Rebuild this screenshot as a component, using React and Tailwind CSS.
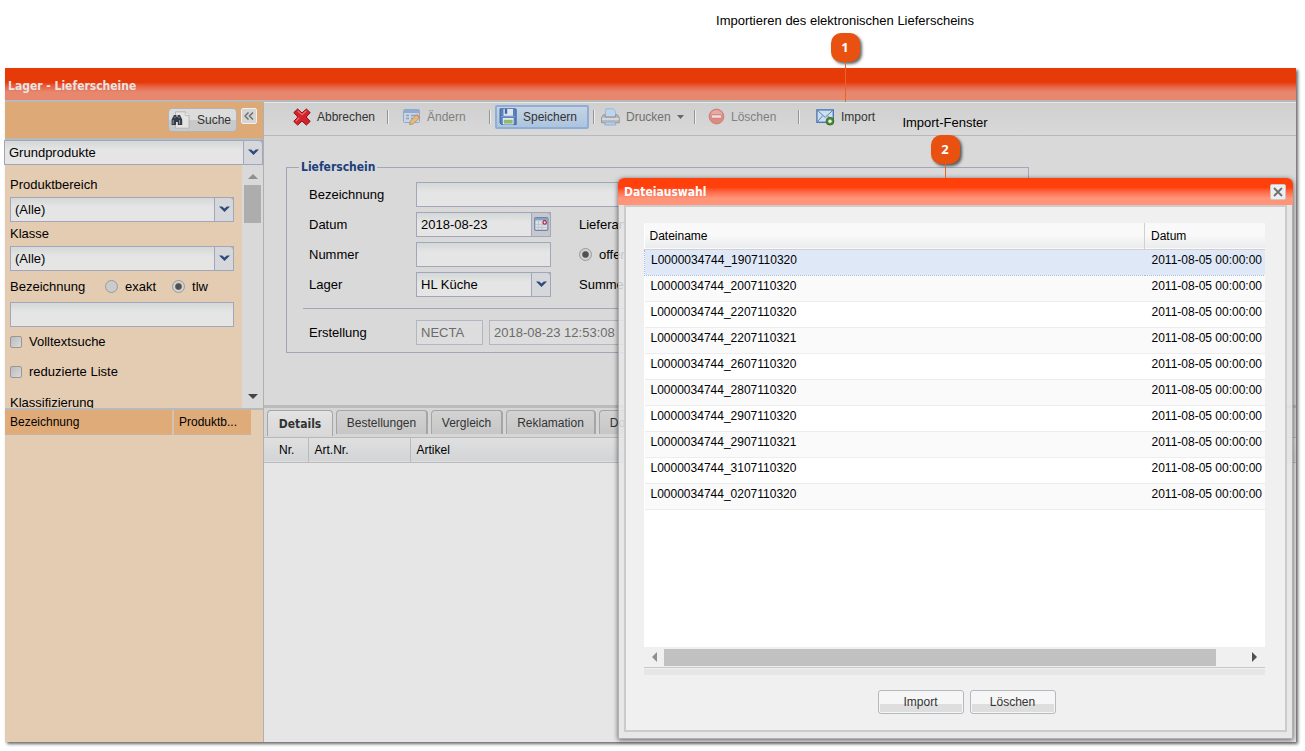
import { useState } from 'react';

const FILES = [
    'L0000034744_1907110320',
    'L0000034744_2007110320',
    'L0000034744_2207110320',
    'L0000034744_2207110321',
    'L0000034744_2607110320',
    'L0000034744_2807110320',
    'L0000034744_2907110320',
    'L0000034744_2907110321',
    'L0000034744_3107110320',
    'L0000034744_0207110320',
];

const TABS = [
    { name: 'Bestellungen', width: 'w-[92px]' },
    { name: 'Vergleich', width: 'w-[72px]' },
    { name: 'Reklamation', width: 'w-[90px]' },
    { name: 'Dokumente', width: 'w-[84px]' },
];

const fieldClass = 'h-[25px] border border-[#a1a6ba] bg-linear-to-b from-[#d4d8d7] to-[#e5e5e5] to-40% px-1 text-[13px] text-black rounded-none outline-none';

/* ---------- icons ---------- */

function CancelIcon() {
    return (
        <svg width="18" height="18" viewBox="0 0 18 18" className="shrink-0">
            <path d="M4.6 1 9 4.900l4.400-3.900 3.800 3.600L13.200 9l4 4.400-3.800 3.700L9 13.100l-4.400 4-3.800-3.700 4-4.400-4-4.400z" fill="#d3222b" stroke="#8f1118" strokeWidth="1" strokeLinejoin="round" />
            <path d="M4.6 2.800 9 6.700l4.400-3.900M2.800 13.200 6.200 9.600" fill="none" stroke="#ee6c6c" strokeWidth="1.300" />
        </svg>
    );
}

function EditIcon() {
    return (
        <svg width="18" height="18" viewBox="0 0 18 18" className="shrink-0">
            <rect x="0.5" y="1.5" width="16" height="13" rx="1" fill="#cbd5e2" stroke="#93a9c9" />
            <path d="M1 2h15v3H1z" fill="#8fabd4" />
            <path d="M3 7.5h3M8 7.5h5M3 10.5h3M8 10.5h3" stroke="#8da3c2" strokeWidth="1.4" />
            <path d="m6.600 16.600.8-3.600L14 6.400l3 2.800-6.600 6.600z" fill="#e2bd7c" stroke="#b89058" strokeWidth="0.9" />
            <path d="m13 7.400 3 2.800 1-1-3-2.800z" fill="#d98e80" />
        </svg>
    );
}

function SaveIcon() {
    return (
        <svg width="18" height="18" viewBox="0 0 18 18" className="shrink-0">
            <path d="M1 .8h15.500q.7 0 .7.7v15H2.500L1 15z" fill="#5a80bf" stroke="#3d629f" strokeWidth="0.9" />
            <path d="M4.500 1h9.500v6.800H4.500z" fill="#dfe5ed" />
            <path d="M5.800 1h2.400v4.800H5.800z" fill="#41659f" />
            <path d="M2 8.600h14.400" stroke="#7d9dd0" strokeWidth="1" />
            <path d="M3.800 10h10.800v6.500H3.800z" fill="#e3eae4" />
            <path d="M4.800 11.800h8.800v3.800H4.800z" fill="#8dba70" />
        </svg>
    );
}

function PrinterIcon() {
    return (
        <svg width="19" height="18" viewBox="0 0 19 18" className="shrink-0">
            <path d="M5 .8h7l2.600 2.400V9H4z" fill="#bfd5ee" stroke="#92afd0" strokeWidth="0.8" />
            <path d="M2.400 6.800h1.800V9h10.400V6.800h1.800l1.800 2.600v5.400H.6V9.400z" fill="#b9bbbe" stroke="#8f9195" strokeWidth="0.9" />
            <path d="M1 11h16.800" stroke="#dddfe1" strokeWidth="1.6" />
            <path d="M4.500 14h9.500l.8 3H3.700z" fill="#b4cde9" stroke="#8ba8c8" strokeWidth="0.8" />
        </svg>
    );
}

function DeleteIcon() {
    return (
        <svg width="17" height="17" viewBox="0 0 17 17" className="shrink-0">
            <circle cx="8.5" cy="8.5" r="7.4" fill="#db8b82" stroke="#cf8279" />
            <path d="M2.600 6.600a6.200 6.200 0 0 1 11.800 0q-6-1.400-11.800 0z" fill="#e5aaa3" />
            <rect x="3.6" y="7" width="9.8" height="3" rx="0.6" fill="#ece3e2" stroke="#cf776e" strokeWidth="0.5" />
        </svg>
    );
}

function MailIcon() {
    return (
        <svg width="19" height="18" viewBox="0 0 19 18" className="shrink-0">
            <rect x="0.9" y="1.9" width="16.4" height="12.4" fill="#cfdeef" stroke="#4f78b3" strokeWidth="1.4" />
            <path d="m1.400 2.400 7.700 7 7.700-7M1.400 13.800l5.200-6M16.800 13.800l-5.200-6" fill="none" stroke="#5b82ba" strokeWidth="1" />
            <circle cx="14" cy="13.2" r="3.9" fill="#4f8a35" stroke="#35671f" strokeWidth="0.8" />
            <circle cx="14" cy="13.2" r="1.7" fill="#e9f3e4" />
        </svg>
    );
}

function BinocularsIcon() {
    return (
        <svg width="20" height="18" viewBox="0 0 20 18" className="shrink-0">
            <path d="M4.500.8h9.800L18 4.500v12.700H4.500z" fill="#e4e4e2" stroke="#b3b3af" strokeWidth="0.9" />
            <path d="M14.300.8v3.700H18" fill="#f1f1ef" stroke="#b3b3af" strokeWidth="0.8" />
            <path d="M3 4h2.400v1.800h1.200V4H9l2.200 4.600V14H6.800v-3H5v3H.6V8.600z" fill="#353c46" />
            <path d="M2.200 9v4M8.600 9v4M3.900 5.600v1.600M8 5.600v1.600" stroke="#8b97a8" strokeWidth="1" />
        </svg>
    );
}

function CalendarIcon() {
    return (
        <svg width="15" height="15" viewBox="0 0 15 15">
            <rect x="0.7" y="0.7" width="13.2" height="12.6" rx="1" fill="#dcdfe4" stroke="#7086ab" strokeWidth="1.2" />
            <path d="M1 1h12.600v2.400H1z" fill="#8ba0c2" />
            <path d="M4.500 4v9M8 4v9M1.500 7.500H13M1.500 10.400H13" stroke="#bac1cc" strokeWidth="0.8" />
            <circle cx="10.7" cy="5.4" r="1.7" fill="#f3eaea" stroke="#a02a35" strokeWidth="1.2" />
        </svg>
    );
}

function Chevron() {
    return (
        <svg width="11" height="7" viewBox="0 0 11 7">
            <path d="M0 .5h3.200l2.300 2 2.300-2H11L5.500 6z" fill="#2d4a80" />
        </svg>
    );
}

function Triangle({ dir, color = '#505050' }) {
    const d = {
        up: 'M0 8 5 3l5 5z',
        down: 'M0 2h10L5 7z',
        left: 'M7 0v10L2 5z',
        right: 'M3 0v10l5-5z',
    }[dir];
    return (
        <svg width="10" height="10" viewBox="0 0 10 10">
            <path d={d} fill={color} />
        </svg>
    );
}

/* ---------- form parts ---------- */

function Combo({ id, value, label, className = '' }) {
    return (
        <div className={`relative ${className}`}>
            <select id={id} aria-label={label} defaultValue={value} className={`${fieldClass} w-full appearance-none pr-5`}>
                <option>{value}</option>
            </select>
            <span className="pointer-events-none absolute inset-y-0 right-0 flex w-5 items-center justify-center rounded-tr-sm border border-[#a1a6ba] bg-[#d6d7da]">
                <Chevron />
            </span>
        </div>
    );
}

function Radio({ name, label, checked }) {
    return (
        <label className="flex items-center gap-[7px]">
            <input
                type="radio"
                name={name}
                defaultChecked={checked}
                className="h-[13px] w-[13px] appearance-none rounded-full border border-[#9a9a9a] bg-[#cbcbcb] checked:bg-radial checked:from-[#505050] checked:from-35% checked:to-[#d2d2d2] checked:to-50%"
            />
            {label}
        </label>
    );
}

function Check({ label }) {
    return (
        <label className="flex h-[30px] items-center gap-[7px]">
            <input type="checkbox" className="h-3 w-3 appearance-none rounded-xs border border-[#979797] bg-linear-to-br from-[#bcbcbc] to-[#dadada]" />
            {label}
        </label>
    );
}

function Separator() {
    return <span className="h-[14px] w-0.5 border-r border-[#eeeeee] bg-[#959595]" />;
}

function ToolButton({ icon, children, className }) {
    return (
        <button type="button" className={`flex h-6 items-center gap-1.5 text-[12px] ${className}`}>
            {icon}
            {children}
        </button>
    );
}

function Toolbar() {
    return (
        <div className="flex h-[34px] items-center gap-1 border-b border-[#b9b9b9] bg-linear-to-b from-[#cfcfcf] to-[#d9d9d9] pb-1 pl-[29px] shadow-[inset_0_1px_0_#e6e6e6]">
            <ToolButton icon={<CancelIcon />} className="w-[90px] text-[#333]">Abbrechen</ToolButton>
            <Separator />
            <ToolButton icon={<EditIcon />} className="w-[92px] pl-2.5 text-[#808080]">Ändern</ToolButton>
            <Separator />
            <ToolButton icon={<SaveIcon />} className="w-[94px] rounded-xs border-2 border-[#8dafd6] bg-linear-to-b from-[#c6d4e4] to-[#adc4df] pl-0.5 text-[#333]">Speichern</ToolButton>
            <Separator />
            <ToolButton icon={<PrinterIcon />} className="w-[91px] pl-0.5 text-[#707070]">
                Drucken
                <svg width="7" height="4" viewBox="0 0 7 4">
                    <path d="M0 0h7L3.500 4z" fill="#666" />
                </svg>
            </ToolButton>
            <Separator />
            <ToolButton icon={<DeleteIcon />} className="w-[94px] pl-2 text-[#808080]">Löschen</ToolButton>
            <Separator />
            <ToolButton icon={<MailIcon />} className="pl-3 text-[#333]">Import</ToolButton>
        </div>
    );
}

function Sidebar() {
    return (
        <aside className="flex w-[259px] shrink-0 flex-col border-r border-[#b0b0b0] bg-[#e4ccb3] text-[13px]">
            <div className="flex h-[38px] items-start justify-end gap-1 border-b-2 border-[#b9b9b9] bg-[#dda977] pt-1.5 pr-1.5">
                <button type="button" className="flex h-6 w-[69px] items-center gap-1.5 rounded-sm border border-[#b3b3b3] bg-linear-to-b from-[#dcdcdc] from-50% to-[#c9c9c9] to-50% pl-0.5 text-[12px] text-[#333]">
                    <BinocularsIcon />
                    Suche
                </button>
                <button type="button" aria-label="Einklappen" className="flex h-4 w-4 items-center justify-center rounded-xs border border-[#efefef] bg-[#d5d5d5]">
                    <svg width="10" height="8" viewBox="0 0 10 8">
                        <path d="M4.500.5 1 4l3.500 3.500M9 .5 5.500 4 9 7.500" fill="none" stroke="#707070" strokeWidth="1.500" />
                    </svg>
                </button>
            </div>
            <Combo value="Grundprodukte" label="Produktart" className="-ml-px" />
            <div className="flex h-[245px] border-b-2 border-[#b9b9b9]">
                <div className="min-w-0 flex-1 overflow-hidden px-[5px] pt-2 pr-2">
                    <label htmlFor="bereich" className="block leading-6">Produktbereich</label>
                    <Combo id="bereich" value="(Alle)" />
                    <label htmlFor="klasse" className="block leading-6">Klasse</label>
                    <Combo id="klasse" value="(Alle)" />
                    <div className="flex h-[31px] items-center">
                        <label htmlFor="suchbegriff" className="w-[95px]">Bezeichnung</label>
                        <div className="flex gap-4">
                            <Radio name="suchart" label="exakt" />
                            <Radio name="suchart" label="tlw" checked />
                        </div>
                    </div>
                    <input id="suchbegriff" type="text" className={`${fieldClass} w-full`} />
                    <Check label="Volltextsuche" />
                    <Check label="reduzierte Liste" />
                    <span className="block leading-8">Klassifizierung</span>
                </div>
                <div className="flex w-[21px] flex-col items-center justify-between bg-[#d9d9d9] pt-1.5 pb-1.5">
                    <div className="flex flex-col items-center gap-1">
                        <Triangle dir="up" color="#8f8f8f" />
                        <div className="h-[38px] w-[17px] bg-[#adadad]" />
                    </div>
                    <Triangle dir="down" color="#444" />
                </div>
            </div>
            <table className="w-[246px] table-fixed text-left text-[12px]">
                <thead>
                    <tr className="h-6 border-b border-[#c5b49f] bg-[#dfab79]">
                        <th className="w-[168px] border-r-2 border-[#d2c3b3] pl-[5px] font-normal">Bezeichnung</th>
                        <th className="pl-[5px] font-normal">Produktb...</th>
                    </tr>
                </thead>
            </table>
        </aside>
    );
}

function DeliveryForm() {
    return (
        <div className="h-[272px] border-b-[3px] border-[#bbbbbb] pt-[21px] pl-[22px] text-[13px]">
            <fieldset className="w-[743px] border border-[#a2a6b8] px-4 pb-[7px]">
                <legend className="-ml-1 px-0.5 font-['DejaVu_Sans_Condensed','Noto_Sans'] text-[12px] leading-5 font-bold text-[#1c3f7c]">Lieferschein</legend>
                <div className="flex flex-col gap-[5px] pt-[5px] pl-1.5">
                    <div className="flex items-center">
                        <label htmlFor="bezeichnung" className="w-[107px]">Bezeichnung</label>
                        <input id="bezeichnung" type="text" className={`${fieldClass} flex-1`} />
                    </div>
                    <div className="flex items-center">
                        <label htmlFor="datum" className="w-[107px]">Datum</label>
                        <div className="relative w-[135px]">
                            <input id="datum" type="text" defaultValue="2018-08-23" className={`${fieldClass} w-full`} />
                            <button type="button" aria-label="Kalender" className="absolute inset-y-0 right-0 flex w-5 items-center justify-center rounded-tr-sm border border-[#a1a6ba] bg-[#c6c8cc]">
                                <CalendarIcon />
                            </button>
                        </div>
                        <span className="ml-7">Lieferant</span>
                    </div>
                    <div className="flex items-center">
                        <label htmlFor="nummer" className="w-[107px]">Nummer</label>
                        <input id="nummer" type="text" className={`${fieldClass} mr-7 w-[135px]`} />
                        <Radio name="status" label="offen" checked />
                    </div>
                    <div className="flex items-center">
                        <label htmlFor="lager" className="w-[107px]">Lager</label>
                        <Combo id="lager" value="HL Küche" className="mr-7 w-[135px]" />
                        <span>Summe</span>
                    </div>
                </div>
                <hr className="my-[11px] border-[#a2a6b8]" />
                <div className="flex items-center gap-1.5 pl-1.5">
                    <label htmlFor="ersteller" className="w-[101px]">Erstellung</label>
                    <input id="ersteller" type="text" disabled defaultValue="NECTA" className="h-[25px] w-[67px] border border-[#b3b6c2] bg-[#dddddd] px-1 text-[#6c6c6c]" />
                    <input type="text" aria-label="Erstellt am" disabled defaultValue="2018-08-23 12:53:08" className="h-[25px] w-40 border border-[#b3b6c2] bg-[#dddddd] px-1 text-[#6c6c6c]" />
                </div>
            </fieldset>
        </div>
    );
}

function Details() {
    return (
        <div className="flex flex-1 flex-col bg-[#e6e6e6] text-[12px]">
            <div role="tablist" className="flex h-[30px] items-start gap-[3px] overflow-hidden border-b border-[#b9b9b9] bg-[#d6d6d6] pt-0.5 pl-[3px]">
                <button type="button" role="tab" aria-selected="true" className="h-[26px] w-[66px] shrink-0 rounded-t-sm border border-b-0 border-[#a5a5a5] bg-linear-to-b from-[#e3e3e3] to-[#d8d8d8] font-['DejaVu_Sans_Condensed','Noto_Sans'] font-bold text-[#333]">
                    Details
                </button>
                {TABS.map((tab) => (
                    <button key={tab.name} type="button" role="tab" className={`h-6 shrink-0 rounded-t-sm border border-r-2 border-b-0 border-[#a5a5a5] bg-linear-to-b from-[#d3d3d3] to-[#c6c6c6] text-[#333] ${tab.width}`}>
                        {tab.name}
                    </button>
                ))}
            </div>
            <table className="w-full table-fixed text-left">
                <thead>
                    <tr className="h-6 border-b border-[#b9b9b9] bg-linear-to-b from-[#e0e0e0] to-[#d2d4d6]">
                        <th className="w-11 border-r border-[#b9b9b9] pl-[15px] font-normal">Nr.</th>
                        <th className="w-[102px] border-r border-[#b9b9b9] pl-1.5 font-normal">Art.Nr.</th>
                        <th className="pl-1.5 font-normal">Artikel</th>
                    </tr>
                </thead>
            </table>
        </div>
    );
}

function FileDialog() {
    const [selected, setSelected] = useState(0);
    const buttonClass = 'h-6 w-[86px] rounded-[3px] border border-[#b4b9be] bg-linear-to-b from-[#f6f6f6] from-60% to-[#dedede] to-60% text-[#333] shadow-[inset_0_0_0_1px_#f6f6f6]';

    return (
        <div role="dialog" aria-label="Dateiauswahl" className="absolute top-[110px] right-[3px] w-[675px] rounded-t-md border border-t-0 border-[#b0b0b0] bg-[#e6e6e6]/85 shadow-[0_1px_5px_rgba(0,0,0,0.6)]">
            <div className="-mx-px flex h-[27px] items-center justify-between rounded-t-md bg-linear-to-b from-[#ff400a] from-35% to-[#ff9478] to-75% pr-[7px] pl-1.5">
                <h2 className="font-['DejaVu_Sans_Condensed','Noto_Sans'] text-[12px] font-bold text-white">Dateiauswahl</h2>
                <button type="button" aria-label="Schließen" className="flex h-4 w-4 items-center justify-center rounded-xs border border-[#c9c9c9] bg-[#eeeeee]">
                    <svg width="10" height="10" viewBox="0 0 10 10">
                        <path d="m1 1 8 8M9 1 1 9" stroke="#707070" strokeWidth="1.800" />
                    </svg>
                </button>
            </div>
            <div className="mx-[5px] mb-1.5 border-2 border-[#cbcbcb] bg-[#f0f0f0] pt-4 pr-5 pb-4 pl-[18px] text-[12px] text-black">
                <div className="h-[424px] overflow-hidden bg-white">
                    <table className="w-[700px] table-fixed text-left">
                        <thead>
                            <tr className="h-[26px] border-b border-[#d0d0d0] bg-linear-to-b from-[#f9f9f9] from-45% to-[#ebecee] to-100%">
                                <th className="w-[500px] border-r border-[#d0d0d0] pl-[5px] font-normal">Dateiname</th>
                                <th className="pl-1.5 font-normal">Datum</th>
                            </tr>
                        </thead>
                        <tbody>
                            {FILES.map((file, i) => (
                                <tr
                                    key={file}
                                    onClick={() => setSelected(i)}
                                    className={
                                        i === selected
                                            ? 'h-[26px] border border-dotted border-[#a3bae9] bg-[#dfe8f6]'
                                            : 'h-[26px] border-b border-[#ededed] even:bg-[#fafafa]'
                                    }
                                >
                                    <td className="pb-1 pl-1.5">{file}</td>
                                    <td className="pb-1 pl-[7px] whitespace-nowrap">2011-08-05 00:00:00</td>
                                </tr>
                            ))}
                        </tbody>
                    </table>
                </div>
                <div className="flex h-[21px] items-center border-b border-[#c8c8c8] px-1.5">
                    <Triangle dir="left" color="#8f8f8f" />
                    <div className="mx-1 h-[17px] flex-1">
                        <div className="h-full w-[95%] bg-[#c1c1c1]" />
                    </div>
                    <Triangle dir="right" />
                </div>
                <div className="mt-px h-1.5 bg-[#e6e6e6]" />
                <div className="mt-[15px] flex justify-center gap-1.5 pl-6">
                    <button type="button" className={buttonClass}>Import</button>
                    <button type="button" className={buttonClass}>Löschen</button>
                </div>
            </div>
        </div>
    );
}

/* Numbered marker with its caption above and a pointer line below. */
function Callout({ number, text, className, lineClass }) {
    return (
        <div className={`absolute flex w-[300px] flex-col items-center text-[13px] text-black ${className}`}>
            <span className="leading-5">{text}</span>
            <span className="mt-0.5 flex h-[29px] w-[29px] items-center justify-center rounded-[10px] bg-[#e95111] font-['Noto_Sans'] text-[13px] font-bold text-white shadow-[2px_2px_3px_rgba(0,0,0,0.6)]">
                {number}
            </span>
            <span className={`w-px bg-[#e8622c] ${lineClass}`} />
        </div>
    );
}

export default function App() {
    return (
        <div className="relative flex min-h-screen flex-col bg-white pt-[68px] pr-[9px] pb-[9px] pl-[5px] font-['Liberation_Sans',sans-serif] text-black">
            <main className="relative flex flex-1 flex-col bg-[#d9d9d9] shadow-[2px_2px_3px_rgba(0,0,0,0.6)]">
                <h1 className="h-[34px] border-b-2 border-[#b9b9b9] bg-linear-to-b from-[#e73a09] from-45% to-[#e6876e] to-75% pt-1 pl-[3px] font-['DejaVu_Sans_Condensed','Noto_Sans'] text-[12px] leading-7 font-bold text-[#e9e4e2]">
                    Lager - Lieferscheine
                </h1>
                <div className="flex flex-1">
                    <Sidebar />
                    <section className="flex min-w-0 flex-1 flex-col">
                        <Toolbar />
                        <DeliveryForm />
                        <Details />
                    </section>
                </div>
                <FileDialog />
            </main>
            <Callout number="1" text="Importieren des elektronischen Lieferscheins" className="top-[11px] left-[695px]" lineClass="h-10" />
            <Callout number="2" text="Import-Fenster" className="top-[113px] left-[795px]" lineClass="h-3.5" />
        </div>
    );
}
